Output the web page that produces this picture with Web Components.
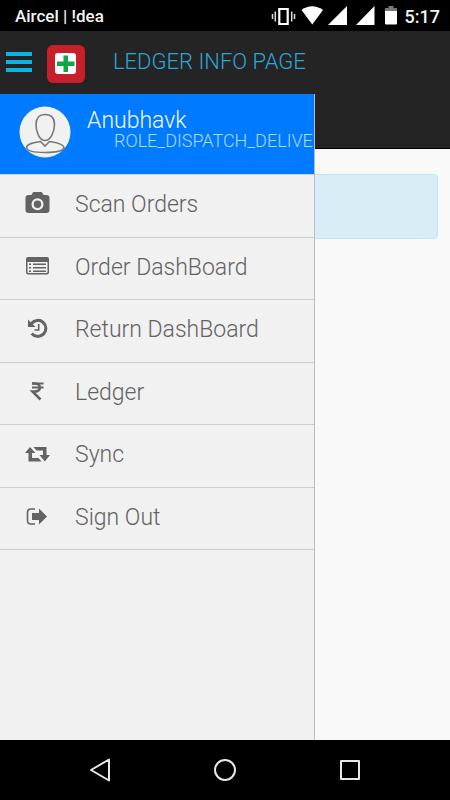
<!DOCTYPE html>
<html lang="en">
<head>
<meta charset="utf-8">
<meta name="viewport" content="width=device-width, initial-scale=1">
<title>Ledger Info Page</title>
<style>
  html, body { margin: 0; height: 100%; }
  body { font-family: Roboto, "Liberation Sans", sans-serif; background: #000; }
</style>
</head>
<body>
<ledger-app></ledger-app>
<script>
const define = (name, html, setup) => {
  const template = document.createElement('template');
  template.innerHTML = html;
  customElements.define(name, class extends HTMLElement {
    constructor() {
      super();
      this.attachShadow({ mode: 'open' }).append(template.content.cloneNode(true));
    }
    connectedCallback() { if (setup) setup(this); }
  });
};

const icons = {
  camera: '<path fill-rule="evenodd" d="M4.500 4H7.500L8.500 2Q9 1 10 1H17Q18 1 18.500 2L19.500 4H22.500Q25.500 4 25.500 7V19Q25.500 22 22.500 22H4.500Q1.500 22 1.500 19V7Q1.500 4 4.500 4ZM13.500 7.300a6 6 0 1 0 0 12a6 6 0 1 0 0-12Z"/><circle cx="13.500" cy="13.300" r="3.700"/>',
  list: '<path fill-rule="evenodd" d="M4 3H23Q25 3 25 5V18.500Q25 20.500 23 20.500H4Q2 20.500 2 18.500V5Q2 3 4 3ZM3.500 8V18Q3.500 19 4.500 19H22.500Q23.500 19 23.500 18V8Z"/><path d="M5 9.500h2v1.500h-2zM5 13h2v1.500h-2zM5 16.500h2v1.500h-2zM9 9.500h13v1.500H9zM9 13h13v1.500H9zM9 16.500h13v1.500H9z"/>',
  history: '<path fill="none" stroke="currentColor" stroke-width="3" d="M7.500 7.500A8 8 0 1 1 7.700 17.500"/><path d="M4 3.500V11H11.500Z"/><path fill="none" stroke="currentColor" stroke-width="1.600" d="M14.700 8V14H10.500"/>',
  rupee: '<path fill="none" stroke="currentColor" stroke-width="2" d="M8 4.500H19.500M8 8.500H19.500"/><path fill="none" stroke="currentColor" stroke-width="2.500" d="M8 4.500H11C17.500 4.500 17.500 12.500 11 12.500H8.500L16.500 20.500"/>',
  sync: '<path d="M6 6L11.500 12H8V17H14.500L17.500 20.500H4.500V12H1ZM9.500 6H22.500V14H26L20.800 20.500L15.500 14H19V9.500H12.500Z"/>',
  exit: '<path fill="none" stroke="currentColor" stroke-width="1.600" d="M11 5H7Q3.500 5 3.500 8.500V16.500Q3.500 20 7 20H11"/><path d="M8 9H15V4.500L23 12.500L15 20.500V16H8Z"/>'
};

define('status-bar', `
  <style>
    :host { display: flex; align-items: center; justify-content: space-between; height: 31px;
      padding: 0 10px 0 15px; background: #000; color: #f4f4f4; font-size: 17px; font-weight: 500; line-height: 31px; }
    .right { display: flex; align-items: center; }
    svg { display: block; fill: #fff; }
    span, time { padding-top: 2px; line-height: 29px; }
    time { font-size: 18px; }
  </style>
  <span>Aircel | !dea</span>
  <div class="right">
    <svg width="134" height="24" viewBox="270 4 134 24" aria-hidden="true">
      <path fill="none" stroke="#fff" stroke-width="2.200" d="M278.300 9H286.700V24H278.300Z"/>
      <path fill="none" stroke="#ddd" stroke-width="1.500" d="M271.500 14v5M274.300 11.500v10M290.700 11.500v10M293.500 14v5"/>
      <path d="M300.500 10Q311 2.500 322 10L311.300 24.500Z"/>
      <path d="M327 25L346 6V25ZM355 25L373.500 6V25Z"/>
      <path fill="#777" d="M384 11V8H387.500V6H392.500V8H396V11Z"/>
      <path d="M384 11H396V23.500Q396 24.500 395 24.500H385Q384 24.500 384 23.500Z"/>
    </svg>
    <time>5:17</time>
  </div>`);

define('app-header', `
  <style>
    :host { display: flex; align-items: center; height: 62px; padding: 0 6px; color: #2ca6d8; }
    button { display: block; padding: 0; border: 0; background: none; }
    svg { display: block; }
    .logo { margin: 3px 28px 0 15px; }
    h1 { margin: 0; font-size: 22px; font-weight: 300; line-height: 28px; white-space: nowrap; }
  </style>
  <button aria-label="Toggle menu">
    <svg width="26" height="20" viewBox="0 0 26 20" fill="#08b5e6"><path d="M0 0H26V4H0ZM0 8H26V12H0ZM0 16H26V20H0Z"/></svg>
  </button>
  <svg class="logo" width="38" height="38" viewBox="0 0 38 38" aria-hidden="true">
    <rect width="38" height="38" rx="6" fill="#c8202a"/>
    <rect x="8" y="8" width="21" height="21" rx="3" fill="#fff"/>
    <path fill="#10a54a" d="M16.500 10.500H21V16.500H27.500V21H21V27H16.500V21H10V16.500H16.500Z"/>
  </svg>
  <h1><slot></slot></h1>`);

define('profile-card', `
  <style>
    :host { display: flex; box-sizing: border-box; height: 80px; padding: 12px 0 0 19px; background: #007aff; overflow: hidden; }
    svg { display: block; flex: none; }
    .who { display: flex; flex-direction: column; padding: 4px 0 0 16px; white-space: nowrap; }
    .name { color: #f4f8ff; font-size: 23px; font-weight: 300; line-height: 22px; }
    .role { padding-left: 27px; color: #b4d8ff; font-size: 18px; font-weight: 300; line-height: 18px; }
  </style>
  <svg width="52" height="52" viewBox="0 0 52 52" aria-hidden="true">
    <circle cx="26" cy="26" r="25.500" fill="#f1f1f1"/>
    <g fill="none" stroke="#777" stroke-width="1.600">
      <path d="M26 8.500C19.500 8.500 17 12.500 17 18.500C17 26 20.500 34.500 26 34.500S35.500 26 35.500 18.500C35.500 12.500 32.500 8.500 26 8.500Z"/>
      <path d="M21.500 35.500L26 40L30.500 35.500C36 36.500 44.500 37.500 45 41.500C44 45.500 35 46.500 26 46.500S8 45.500 7.500 41.500C8 37.500 16 36.500 21.500 35.500Z"/>
    </g>
  </svg>
  <div class="who"><span class="name"><slot name="name"></slot></span><span class="role"><slot name="role"></slot></span></div>`);

define('menu-item', `
  <style>
    :host { display: block; box-sizing: border-box; border-bottom: 1px solid #c5ced9; }
    a { display: flex; align-items: flex-start; gap: 24px; height: 100%; box-sizing: border-box;
      padding: 15px 0 0 24px; color: #636363; text-decoration: none; }
    svg { display: block; flex: none; fill: currentColor; }
    span { font-size: 23px; font-weight: 300; line-height: 30px; white-space: nowrap; }
  </style>
  <a href="#"><svg width="27" height="26" viewBox="0 -1 27 26" aria-hidden="true"></svg><span><slot></slot></span></a>`,
  el => { el.shadowRoot.querySelector('svg').innerHTML = icons[el.getAttribute('icon')]; });

define('side-drawer', `
  <style>
    :host { display: block; box-sizing: border-box; background: #f1f1f1; border-right: 1px solid #bbb; overflow: hidden; }
    nav { display: grid; grid-auto-rows: 1fr; height: 375px; border-top: 1px solid #ccd2da; }
  </style>
  <slot name="profile"></slot>
  <nav aria-label="Main"><slot></slot></nav>`);

define('info-panel', `
  <style>
    :host { display: block; box-sizing: border-box; height: 65px; margin: 25px 12px 0;
      background: #d9edf7; border: 1px solid #bce8f1; border-radius: 4px; }
  </style><slot></slot>`);

define('system-nav', `
  <style>
    :host { display: grid; grid-template-columns: repeat(3, 125px); justify-content: center; height: 60px; background: #000; }
    button { display: grid; place-items: center; padding: 0; border: 0; background: none; }
    svg { display: block; fill: none; stroke: #e8e8e8; stroke-width: 2; stroke-linejoin: round; }
  </style>
  <button aria-label="Back"><svg width="24" height="24" viewBox="0 0 24 24"><path d="M3 12L21 1.500V22.500Z"/></svg></button>
  <button aria-label="Home"><svg width="24" height="24" viewBox="0 0 24 24"><circle cx="12" cy="12" r="10"/></svg></button>
  <button aria-label="Recent apps"><svg width="24" height="24" viewBox="0 0 24 24"><path d="M3 3H21V21H3Z"/></svg></button>`);

define('ledger-app', `
  <style>
    :host { display: flex; flex-direction: column; min-height: 100vh; }
    .stage { display: grid; flex: 1; grid-template: 63px 1fr / 7fr 3fr; }
    .page { grid-area: 1 / 1 / 3 / 3; background: #f9f9f9; }
    .band { height: 117px; background: #242424; border-bottom: 1px solid #000; }
    app-header { grid-area: 1 / 1 / 2 / 3; }
    side-drawer { grid-area: 2 / 1 / 3 / 2; min-width: 0; }
  </style>
  <status-bar></status-bar>
  <div class="stage">
    <main class="page"><div class="band"></div><info-panel></info-panel></main>
    <app-header>LEDGER INFO PAGE</app-header>
    <side-drawer>
      <profile-card slot="profile"><span slot="name">Anubhavk</span><span slot="role">ROLE_DISPATCH_DELIVERY</span></profile-card>
      <menu-item icon="camera">Scan Orders</menu-item>
      <menu-item icon="list">Order DashBoard</menu-item>
      <menu-item icon="history">Return DashBoard</menu-item>
      <menu-item icon="rupee">Ledger</menu-item>
      <menu-item icon="sync">Sync</menu-item>
      <menu-item icon="exit">Sign Out</menu-item>
    </side-drawer>
  </div>
  <system-nav></system-nav>`);
</script>
</body>
</html>
